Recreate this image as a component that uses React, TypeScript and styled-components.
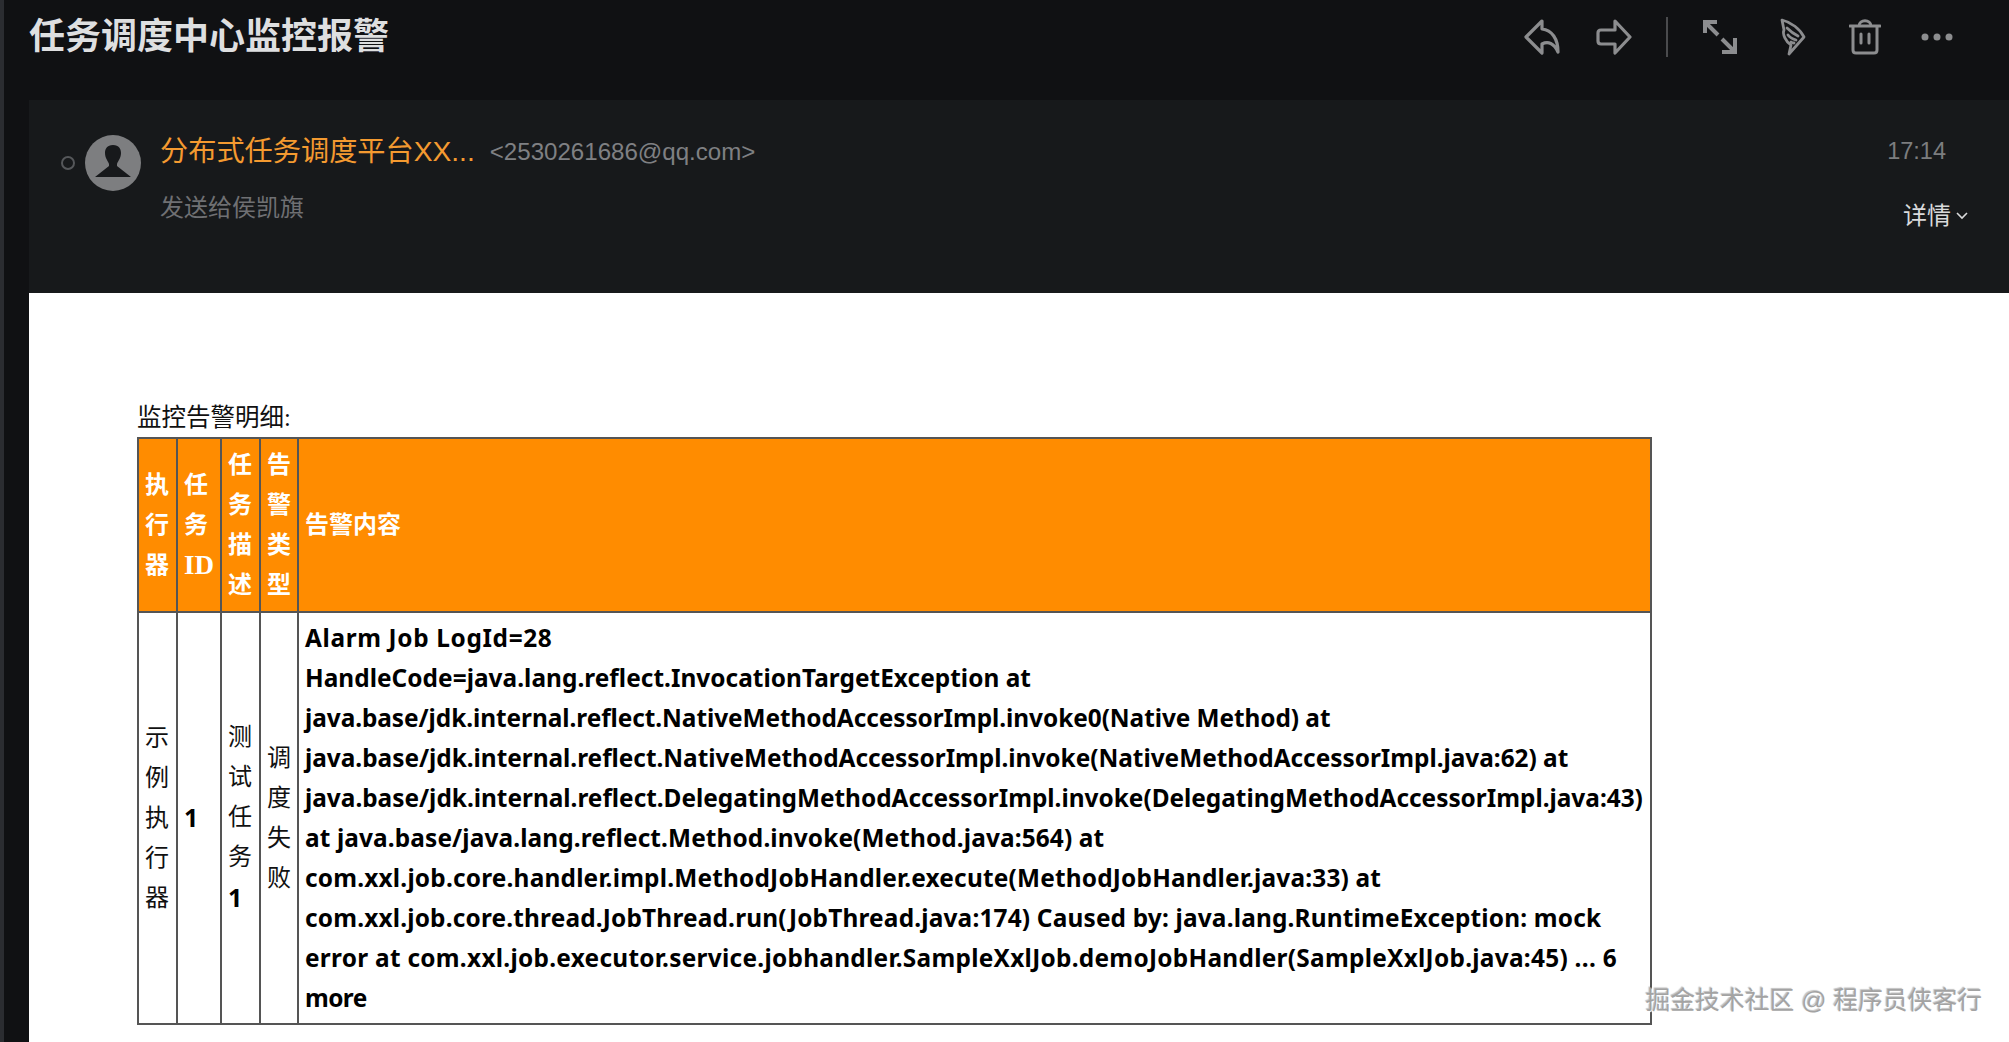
import React from "react";
import styled, { createGlobalStyle } from "styled-components";

const GlobalStyle = createGlobalStyle`
  *, *::before, *::after {
    box-sizing: border-box;
  }
  html, body {
    margin: 0;
    padding: 0;
    height: 100%;
    background: #101113;
  }
  #root {
    height: 100%;
  }
`;

const Page = styled.div`
  position: relative;
  width: 2009px;
  height: 1042px;
  overflow: hidden;
  display: flex;
  background: #101113;
  font-family: "Liberation Sans", "Noto Sans CJK SC", sans-serif;
`;

const SideStrip = styled.div`
  width: 4px;
  flex-shrink: 0;
  background: #2b2d31;
`;

const Main = styled.div`
  flex: 1;
  min-width: 0;
  display: flex;
  flex-direction: column;
`;

const TitleBar = styled.div`
  height: 100px;
  flex-shrink: 0;
  display: flex;
  align-items: flex-start;
  justify-content: space-between;
  padding: 0 56px 0 25px;
`;

const Title = styled.h1`
  margin: 15px 0 0;
  font-size: 36px;
  line-height: 44px;
  font-weight: 700;
  color: #dedfe0;
`;

const Toolbar = styled.div`
  display: flex;
  align-items: center;
  margin-top: 17px;
  height: 40px;
  color: #8c8d8f;
`;

const ToolButton = styled.span<{ $gap?: number }>`
  display: flex;
  margin-left: ${(p) => p.$gap ?? 0}px;
`;

const ToolDivider = styled.span`
  width: 2px;
  height: 40px;
  margin-left: 34px;
  background: #4a4b4d;
`;

const SenderPanel = styled.div`
  height: 193px;
  flex-shrink: 0;
  margin-left: 25px;
  display: flex;
  background: #17191b;
  padding: 35px 41px 0 32px;
`;

const StatusDot = styled.span`
  width: 14px;
  height: 14px;
  margin-top: 21px;
  border: 2px solid #55575a;
  border-radius: 50%;
`;

const Avatar = styled.div`
  width: 56px;
  height: 56px;
  margin-left: 10px;
  border-radius: 50%;
  overflow: hidden;
  background: #7d7e80;
  flex-shrink: 0;
`;

const SenderInfo = styled.div`
  flex: 1;
  margin-left: 19px;
`;

const SenderLine = styled.div`
  display: flex;
  align-items: baseline;
  height: 32px;
`;

const SenderName = styled.span`
  font-size: 28.2px;
  line-height: 32px;
  color: #f49a30;
`;

const SenderMail = styled.span`
  position: relative;
  top: -1px;
  margin-left: 15px;
  font-size: 24.1px;
  line-height: 32px;
  color: #7f8083;
`;

const Recipient = styled.div`
  margin-top: 25px;
  font-size: 24px;
  line-height: 32px;
  color: #6f7073;
`;

const MetaColumn = styled.div`
  display: flex;
  flex-direction: column;
  align-items: flex-end;
`;

const Time = styled.span`
  margin-right: 22px;
  font-size: 23.5px;
  line-height: 32px;
  color: #7c7d7f;
`;

const DetailToggle = styled.span`
  display: flex;
  align-items: center;
  gap: 5px;
  margin-top: 33px;
  font-size: 24px;
  line-height: 32px;
  color: #d9dadb;
`;

const MailBody = styled.div`
  flex: 1;
  margin-left: 25px;
  background: #fff;
  padding: 110px 0 0 108px;
`;

const Caption = styled.div`
  height: 34px;
  font-family: "Liberation Serif", "Noto Sans CJK SC", serif;
  font-size: 24.5px;
  line-height: 30px;
  color: #111;
`;

const AlarmTable = styled.table`
  width: 1515px;
  table-layout: fixed;
  border-collapse: collapse;
  border: 2px solid #555;
  font-family: "Liberation Serif", "Noto Sans CJK SC", serif;
`;

const HeadCell = styled.th`
  padding: 0 6px;
  height: 174px;
  border: 2px solid #555;
  background: #ff8c00;
  color: #fff;
  font-size: 24px;
  font-weight: 700;
  line-height: 40px;
  text-align: left;
`;

const HeadLatin = styled.span`
  font-size: 27px;
`;

const BodyCell = styled.td`
  padding: 0 6px;
  height: 412px;
  border: 2px solid #555;
  color: #111;
  font-size: 24px;
  line-height: 40px;
  text-align: left;
  vertical-align: middle;
`;

const Num = styled.b`
  font-family: "Noto Sans", sans-serif;
  font-size: 25px;
  color: #000;
`;

const TraceCell = styled(BodyCell)`
  font-family: "Noto Sans", sans-serif;
  font-size: 24.4px;
  font-weight: 700;
  white-space: nowrap;
  color: #000;
`;

const TraceLine = styled.div<{ $tracking: number }>`
  letter-spacing: ${(p) => p.$tracking}px;
`;

const Watermark = styled.div`
  position: absolute;
  right: 27px;
  bottom: 25px;
  font-size: 24.8px;
  line-height: 32px;
  color: #a3a3a3;
  text-shadow: 1px 1px 1px #fff, -1px -1px 1px rgba(0, 0, 0, 0.25);
  white-space: nowrap;
`;

const ReplyIcon = () => (
  <svg width="36" height="36" viewBox="0 0 36 36" fill="none" stroke="currentColor" strokeWidth="3.2" strokeLinejoin="round" strokeLinecap="round">
    <path d="M18 2 L2 18 L18 34 L18 25 C24 22 30 24 34 33 C34 20 28 11 18 10 Z" />
  </svg>
);

const ForwardIcon = () => (
  <svg width="36" height="36" viewBox="0 0 36 36" fill="none" stroke="currentColor" strokeWidth="3.2" strokeLinejoin="round" strokeLinecap="round">
    <path d="M19 2 L34 18 L19 34 L19 25 L5 25 Q2 25 2 22 L2 14 Q2 11 5 11 L19 11 Z" />
  </svg>
);

const ExpandIcon = () => (
  <svg width="36" height="36" viewBox="0 0 36 36" fill="none" stroke="currentColor" strokeWidth="4" strokeLinecap="butt">
    <path d="M3 14 L3 3 L15 3 M3 3 L16 16 M33 19 L33 33 L20 33 M33 33 L20 20" />
  </svg>
);

const WingIcon = () => (
  <svg width="26" height="38" viewBox="0 0 26 38" fill="none" stroke="currentColor" strokeWidth="2.8" strokeLinejoin="round" strokeLinecap="round">
    <path d="M2 2 C11 4 20 11 24 19 L9 36 L11 27 C6 24 2 16 4 12 Z" />
    <path d="M7 10 C10 13 14 16 18 18 M8 17 C10 20 13 21 16 22 M11 24 C12 25 13 25 14 25" />
  </svg>
);

const TrashIcon = () => (
  <svg width="32" height="36" viewBox="0 0 32 36" fill="none" stroke="currentColor" strokeWidth="3" strokeLinejoin="round" strokeLinecap="round">
    <path d="M1 7 L31 7 M10 7 C10 0 22 0 22 7 M4 7 L4 31 Q4 34 7 34 L25 34 Q28 34 28 31 L28 7 M12 15 L12 24 M20 15 L20 24" />
  </svg>
);

const MoreIcon = () => (
  <svg width="32" height="8" viewBox="0 0 32 8" fill="currentColor">
    <circle cx="4" cy="4" r="3.5" />
    <circle cx="16" cy="4" r="3.5" />
    <circle cx="28" cy="4" r="3.5" />
  </svg>
);

const PersonIcon = () => (
  <svg width="56" height="56" viewBox="0 0 56 56">
    <path
      fill="#17191b"
      d="M28 10 C22 10 20 14 20 18 C20 23 23 26 24 29 L24 31 L10 42 L46 42 L32 31 L32 29 C33 26 36 23 36 18 C36 14 34 10 28 10 Z"
    />
  </svg>
);

const ChevronIcon = () => (
  <svg width="12" height="8" viewBox="0 0 12 8" fill="none" stroke="currentColor" strokeWidth="1.6">
    <path d="M1 1 L6 6 L11 1" />
  </svg>
);

const traceLines: [string, number][] = [
  ["Alarm Job LogId=28", 0.64],
  ["HandleCode=java.lang.reflect.InvocationTargetException at", 0.04],
  ["java.base/jdk.internal.reflect.NativeMethodAccessorImpl.invoke0(Native Method) at", -0.06],
  ["java.base/jdk.internal.reflect.NativeMethodAccessorImpl.invoke(NativeMethodAccessorImpl.java:62) at", -0.02],
  ["java.base/jdk.internal.reflect.DelegatingMethodAccessorImpl.invoke(DelegatingMethodAccessorImpl.java:43)", -0.01],
  ["at java.base/java.lang.reflect.Method.invoke(Method.java:564) at", 0.12],
  ["com.xxl.job.core.handler.impl.MethodJobHandler.execute(MethodJobHandler.java:33) at", 0.2],
  ["com.xxl.job.core.thread.JobThread.run(JobThread.java:174) Caused by: java.lang.RuntimeException: mock", 0.18],
  ["error at com.xxl.job.executor.service.jobhandler.SampleXxlJob.demoJobHandler(SampleXxlJob.java:45) ... 6", 0.28],
  ["more", -0.6],
];

const App: React.FC = () => {
  return (
    <Page>
      <GlobalStyle />
      <SideStrip />
      <Main>
        <TitleBar>
          <Title>任务调度中心监控报警</Title>
          <Toolbar>
            <ToolButton><ReplyIcon /></ToolButton>
            <ToolButton $gap={36}><ForwardIcon /></ToolButton>
            <ToolDivider />
            <ToolButton $gap={34}><ExpandIcon /></ToolButton>
            <ToolButton $gap={42}><WingIcon /></ToolButton>
            <ToolButton $gap={43}><TrashIcon /></ToolButton>
            <ToolButton $gap={40}><MoreIcon /></ToolButton>
          </Toolbar>
        </TitleBar>
        <SenderPanel>
          <StatusDot />
          <Avatar><PersonIcon /></Avatar>
          <SenderInfo>
            <SenderLine>
              <SenderName>分布式任务调度平台XX...</SenderName>
              <SenderMail>&lt;2530261686@qq.com&gt;</SenderMail>
            </SenderLine>
            <Recipient>发送给侯凯旗</Recipient>
          </SenderInfo>
          <MetaColumn>
            <Time>17:14</Time>
            <DetailToggle>详情<ChevronIcon /></DetailToggle>
          </MetaColumn>
        </SenderPanel>
        <MailBody>
          <Caption>监控告警明细:</Caption>
          <AlarmTable>
            <colgroup>
              <col width="39" />
              <col width="44" />
              <col width="39" />
              <col width="38" />
              <col />
            </colgroup>
            <thead>
              <tr>
                <HeadCell>执行器</HeadCell>
                <HeadCell>任务<HeadLatin>ID</HeadLatin></HeadCell>
                <HeadCell>任务描述</HeadCell>
                <HeadCell>告警类型</HeadCell>
                <HeadCell>告警内容</HeadCell>
              </tr>
            </thead>
            <tbody>
              <tr>
                <BodyCell>示例执行器</BodyCell>
                <BodyCell><Num>1</Num></BodyCell>
                <BodyCell>测试任务<Num>1</Num></BodyCell>
                <BodyCell>调度失败</BodyCell>
                <TraceCell>
                  {traceLines.map(([line, tracking]) => (
                    <TraceLine key={line} $tracking={tracking}>{line}</TraceLine>
                  ))}
                </TraceCell>
              </tr>
            </tbody>
          </AlarmTable>
        </MailBody>
      </Main>
      <Watermark>掘金技术社区 @ 程序员侠客行</Watermark>
    </Page>
  );
};

export default App;
